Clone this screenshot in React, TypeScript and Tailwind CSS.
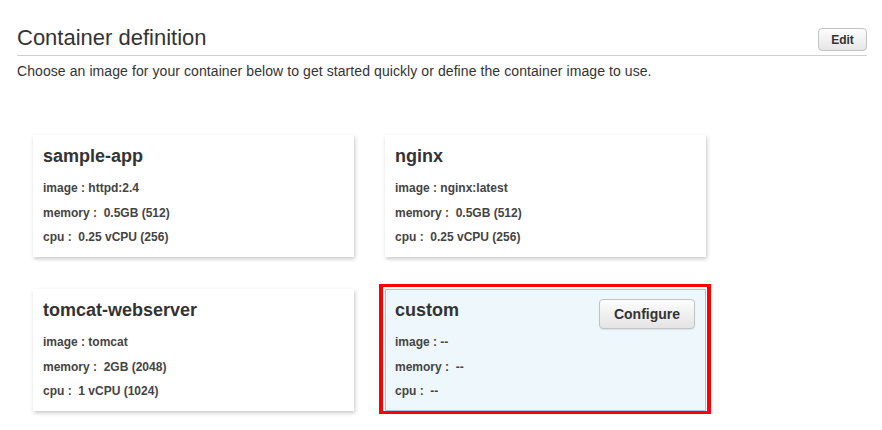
type Container = {
  name: string;
  image: string;
  memory: string;
  cpu: string;
  custom?: boolean;
};

const containers: Container[] = [
  { name: "sample-app", image: "httpd:2.4", memory: "0.5GB (512)", cpu: "0.25 vCPU (256)" },
  { name: "nginx", image: "nginx:latest", memory: "0.5GB (512)", cpu: "0.25 vCPU (256)" },
  { name: "tomcat-webserver", image: "tomcat", memory: "2GB (2048)", cpu: "1 vCPU (1024)" },
  { name: "custom", image: "--", memory: "--", cpu: "--", custom: true },
];

function Card({ item }: { item: Container }) {
  return (
    <div
      className={
        item.custom
          ? "relative h-[122px] border border-[#a3c6e6] bg-[#eef7fc] pl-[9px] pr-[10px] pt-[9px]"
          : "relative h-[122px] border border-white bg-white pl-[9px] pr-[10px] pt-[9px] shadow-[1px_2px_4px_rgba(0,0,0,0.22)]"
      }
    >
      <div className="flex h-[22px] items-start justify-between">
        <h3 className="text-[18px] font-bold leading-[22px] text-[#333]">{item.name}</h3>
        {item.custom && (
          <button className="h-[30px] w-[96px] shrink-0 rounded-[4px] border border-[#c2c2c2] bg-gradient-to-b from-[#fdfdfd] to-[#e4e4e4] text-[14px] font-bold text-[#333] shadow-[0_1px_1px_rgba(0,0,0,0.08)]">
            Configure
          </button>
        )}
      </div>
      <div className="mt-[9px] whitespace-pre text-[12px] font-bold leading-[24.5px] text-[#444]">
        <p>{`image : ${item.image}`}</p>
        <p>{`memory :  ${item.memory}`}</p>
        <p>{`cpu :  ${item.cpu}`}</p>
      </div>
      {/* red highlight drawn around the selected card */}
      {item.custom && (
        <div className="pointer-events-none absolute -bottom-[4px] -left-[7px] -right-[6px] -top-[6px] border-x-4 border-y-[3px] border-[#ff0000]" />
      )}
    </div>
  );
}

export default function App() {
  return (
    <div className="min-h-[430px] w-[882px] bg-white pl-[17px] pr-[15px] font-['Liberation_Sans',Arial,sans-serif]">
      <div className="flex items-end justify-between border-b border-[#cfcfcf] pb-[4px] pt-[24px]">
        <h1 className="text-[22px] leading-[27px] text-[#333]">Container definition</h1>
        <button className="h-[23px] w-[49px] rounded-[4px] border border-[#c2c2c2] bg-gradient-to-b from-[#fdfdfd] to-[#e6e6e6] text-[12px] font-bold text-[#333]">
          Edit
        </button>
      </div>
      <p className="mt-[5px] text-[14px] leading-[20px] tracking-[0.08px] text-[#333]">
        Choose an image for your container below to get started quickly or define the container image to use.
      </p>
      <div className="ml-[16px] mt-[54px] grid w-[673px] grid-cols-[321px_321px] gap-x-[31px] gap-y-[32px]">
        {containers.map((item) => (
          <Card key={item.name} item={item} />
        ))}
      </div>
    </div>
  );
}
